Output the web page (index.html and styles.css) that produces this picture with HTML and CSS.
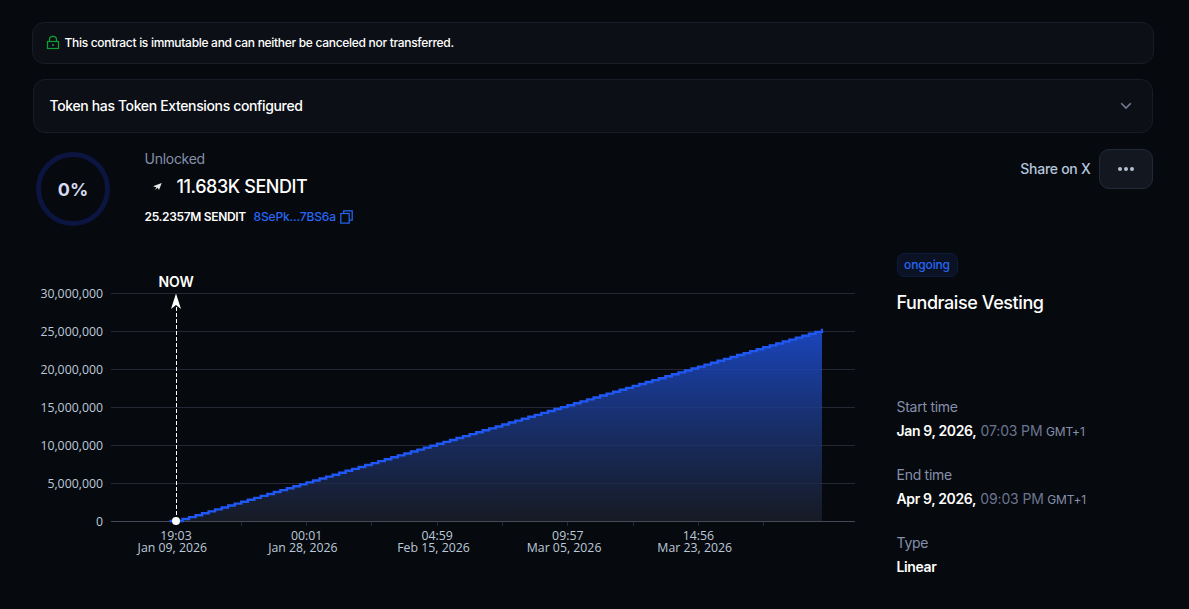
FILE: index.html
```html
<!DOCTYPE html>
<html lang="en">
<head>
<meta charset="utf-8">
<title>Fundraise Vesting</title>
<link rel="stylesheet" href="styles.css">
</head>
<body>
<main class="page">
  <div class="notice">
    <svg class="lock" width="14" height="15" viewBox="0 0 14 15" fill="none" stroke="#0b9f35" stroke-width="1.200"><rect x="1.500" y="6.500" width="11" height="7"/><path d="M3.500 6.500V4.600C3.500 .4 10.500 .4 10.500 4.600V6.500"/><path d="M7 9v2" stroke-width="1.600"/></svg>
    <span>This contract is immutable and can neither be canceled nor transferred.</span>
  </div>
  <div class="accordion">
    <span>Token has Token Extensions configured</span>
    <svg width="12" height="8" viewBox="0 0 12 8" fill="none" stroke="#73788f" stroke-width="1.600"><path d="M1.200 1.300L6 6.100L10.800 1.300"/></svg>
  </div>
  <header class="summary">
    <div class="ring">0%</div>
    <div class="amounts">
      <div class="label unlocked">Unlocked</div>
      <div class="unlocked-amount">
        <svg width="24" height="24" viewBox="0 0 24 24"><path d="M16.700 8L14 15L12.700 12.800L10.200 14.700L11.300 12.300L8 11.300Z" fill="#e8e8e8"/></svg>
        <span>11.683K SENDIT</span>
      </div>
      <div class="total">
        <span class="total-amount">25.2357M SENDIT</span>
        <span class="mint">8SePk...7BS6a</span>
        <svg width="13" height="14" viewBox="0 0 13 14" fill="none" stroke="#2666f5" stroke-width="1.200"><path d="M3.700 3.200V.8H12.200V10.200H9.500"/><rect x=".8" y="3.500" width="8.400" height="9.600"/></svg>
      </div>
    </div>
    <div class="actions">
      <span class="share">Share on X</span>
      <button class="more" aria-label="More"><i></i><i></i><i></i></button>
    </div>
  </header>
  <div class="content">
    <svg class="chart" width="823" height="304" viewBox="33 265 823 304">
      <defs>
        <linearGradient id="area" x1="0" y1="0" x2="0" y2="1">
          <stop offset="0" stop-color="#1d4fd8" stop-opacity=".86"/>
          <stop offset="1" stop-color="#1d222e" stop-opacity=".7"/>
        </linearGradient>
      </defs>
      <g id="grid" class="grid"></g>
      <path id="fill" fill="url(#area)"/>
      <path class="axis" d="M111 521.500H855"/>
      <path id="ticks" class="ticks"/>
      <path id="line" class="line"/>
      <path class="marker" d="M176.500 521V304"/>
      <path d="M176 293.500L181 309L176 305L171 309Z" fill="#fff"/>
      <circle cx="176" cy="521" r="4" fill="#fff"/>
      <text class="now" x="176" y="287">NOW</text>
      <g id="labels" class="axis-text"></g>
    </svg>
    <aside class="details">
      <span class="badge">ongoing</span>
      <h1>Fundraise Vesting</h1>
      <dl>
        <dt>Start time</dt>
        <dd><b>Jan 9, 2026,</b><span class="time">07:03 PM</span><span class="zone">GMT+1</span></dd>
        <dt>End time</dt>
        <dd><b>Apr 9, 2026,</b><span class="time">09:03 PM</span><span class="zone">GMT+1</span></dd>
        <dt>Type</dt>
        <dd><b>Linear</b></dd>
      </dl>
    </aside>
  </div>
</main>
<script src="chart.js"></script>
</body>
</html>
```

FILE: styles.css
```css
* { box-sizing: border-box; }
body {
  margin: 0;
  background: #06090d;
  color: #fff;
  font-family: Inter, "Liberation Sans", sans-serif;
  font-size: 14px;
}
.page {
  width: 1189px;
  height: 609px;
  padding: 22px 35px 0 32px;
  overflow: hidden;
}
.notice {
  display: flex;
  align-items: center;
  gap: 4.500px;
  height: 42px;
  padding: 0 13px 1px;
  border: 1px solid #171c27;
  border-radius: 12px;
  background: #0c1016;
  font-size: 12px;
  font-weight: 500;
  letter-spacing: -.3px;
}
.accordion {
  display: flex;
  align-items: center;
  justify-content: space-between;
  height: 54px;
  margin: 15px 1px 0;
  padding: 0 20px 0 15.500px;
  border: 1px solid #171c27;
  border-radius: 12px;
  background: #0c1016;
  font-weight: 500;
  letter-spacing: -.36px;
}
.accordion span { padding-bottom: 2px; }
.summary {
  display: flex;
  height: 92px;
  margin: 16px 1px 0 4px;
}
.ring {
  display: flex;
  align-items: center;
  justify-content: center;
  width: 74px;
  height: 74px;
  margin-top: 3px;
  padding-top: 1px;
  border: 5px solid #0c1440;
  border-radius: 50%;
  color: #d5daf0;
  font-size: 18px;
  font-weight: 700;
}
.amounts { margin-left: 34.500px; }
.label, dt { color: #858fab; letter-spacing: -.27px; }
.unlocked { line-height: 20px; }
.unlocked-amount {
  display: flex;
  align-items: center;
  gap: 8px;
  height: 28px;
  margin-top: 4px;
  font-size: 18px;
  font-weight: 550;
  letter-spacing: -.42px;
}
.unlocked-amount span { padding-bottom: 1px; }
.total {
  display: flex;
  align-items: center;
  height: 18px;
  margin-top: 6px;
  font-size: 12px;
}
.total svg { margin-top: 1px; }
.total-amount { font-weight: 600; letter-spacing: -.33px; }
.mint {
  margin: 0 4.500px 0 7.700px;
  color: #2666f5;
  font-weight: 500;
  letter-spacing: -.16px;
}
.actions {
  display: flex;
  align-items: center;
  gap: 8.500px;
  height: 40px;
  margin-left: auto;
}
.share {
  padding-bottom: 2px;
  color: #b5c5dc;
  font-weight: 500;
  letter-spacing: -.28px;
}
.more {
  display: flex;
  align-items: center;
  justify-content: center;
  gap: 2px;
  width: 54px;
  height: 40px;
  padding: 0;
  border: 1px solid #222938;
  border-radius: 10px;
  background: #131720;
}
.more i {
  width: 4px;
  height: 4px;
  border-radius: 50%;
  background: #b9bfd3;
}
.content {
  display: flex;
  gap: 40.500px;
  padding: 12px 0 0 1px;
}
.chart { flex: none; margin-top: 12px; }
.grid { stroke: #242835; }
.axis { stroke: #454956; }
.ticks { stroke: #242835; }
.line { fill: none; stroke: #2058f5; stroke-width: 2.400; }
.marker { stroke: #fff; stroke-dasharray: 4 2; }
.now { fill: #fff; font-size: 14px; font-weight: 600; letter-spacing: -.1px; text-anchor: middle; }
.axis-text {
  fill: #bdc9da;
  font: 12.300px "Open Sans", "Noto Sans", sans-serif;
}
.axis-text .x { text-anchor: middle; }
.axis-text .y { text-anchor: end; }
.details { flex: 1; }
.badge {
  display: block;
  width: 61px;
  height: 24px;
  border: 1px solid #0c1a3c;
  border-radius: 7px;
  background: #0b1223;
  color: #2666f5;
  font-size: 12px;
  font-weight: 500;
  letter-spacing: -.15px;
  line-height: 22px;
  text-align: center;
}
h1 {
  margin: 14px 0 0;
  font-size: 18px;
  font-weight: 550;
  letter-spacing: -.42px;
  line-height: 24px;
}
dl { margin: 82px 0 0; }
dt { line-height: 20px; }
dd {
  display: flex;
  align-items: baseline;
  height: 20px;
  margin: 4px 0 24px;
  line-height: 20px;
  white-space: nowrap;
}
b { font-weight: 600; letter-spacing: -.36px; }
.time { margin-left: 4.200px; color: #6b7590; letter-spacing: -.15px; }
.zone { margin-left: 3.500px; color: #858fab; font-size: 12px; letter-spacing: -.15px; }
```

FILE: chart.js
```js
const ns = "http://www.w3.org/2000/svg";
const base = 521, startX = 176, stepX = 6.525, stepY = 1.93, steps = 99;
const byId = id => document.getElementById(id);

function addText(cls, x, y, value) {
  const t = document.createElementNS(ns, "text");
  t.setAttribute("class", cls);
  t.setAttribute("x", x);
  t.setAttribute("y", y);
  t.textContent = value;
  byId("labels").append(t);
}

for (let i = 0; i <= 6; i++) {
  const y = base - 38 * i;
  if (i) {
    const p = document.createElementNS(ns, "path");
    p.setAttribute("d", `M111 ${y + .5}H855`);
    byId("grid").append(p);
  }
  addText("y", 103, y + 5, (i * 5000000).toLocaleString("en-US"));
}

let stair = `M169.5 ${base}`;
for (let i = 1; i <= steps; i++) {
  stair += `H${startX + i * stepX}V${base - i * stepY}`;
}
byId("line").setAttribute("d", stair + "H823");
byId("fill").setAttribute("d", stair + `V${base}Z`);
byId("ticks").setAttribute("d",
  [241, 306, 371, 437, 502, 567, 633, 698, 763].map(x => `M${x + .5} 522v4`).join(""));

[["19:03", "Jan 09, 2026"], ["00:01", "Jan 28, 2026"], ["04:59", "Feb 15, 2026"],
 ["09:57", "Mar 05, 2026"], ["14:56", "Mar 23, 2026"]].forEach(([time, date], i) => {
  const x = 176 + i * 130.6;
  addText("x", x, 540, time);
  addText("x", x - 3.7, 552, date);
});
```
